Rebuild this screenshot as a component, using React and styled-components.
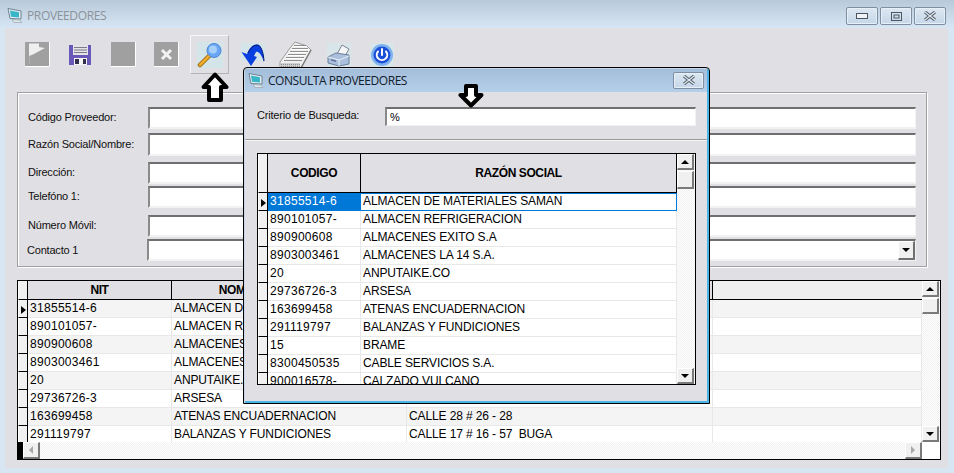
import React from "react";
import styled, { createGlobalStyle } from "styled-components";

const Global = createGlobalStyle`
  html, body { margin: 0; padding: 0; background: #d8e5f2; }
  * { box-sizing: border-box; }
`;

const Win = styled.div`
  position: relative;
  width: 954px;
  height: 473px;
  overflow: hidden;
  display: flex;
  flex-direction: column;
  background: #d8e5f2;
`;
const TitleBar = styled.div`
  height: ${p => (p.$dialog ? 23 : 28)}px;
  flex: none;
  display: flex;
  align-items: center;
  padding: ${p => (p.$dialog ? "0 3px 0 3px" : "2px 8px 0 7px")};
  gap: 4px;
  background: ${p => p.$dialog
    ? "linear-gradient(#a3bcd9, #b6cfe9)"
    : "linear-gradient(#b8c9d9, #d7e6f4)"};
`;
const TitleText = styled.span`
  flex: 1;
  font: 12px "Open Sans", "Noto Sans", sans-serif;
  letter-spacing: ${p => (p.$dialog ? -0.45 : -0.35)}px;
  margin-top: ${p => (p.$dialog ? -1 : 0)}px;
  color: ${p => (p.$dialog ? "#10202c" : "#8b929a")};
`;
const Caption = styled.div`
  display: flex;
  gap: 2px;
  margin-top: ${p => (p.$dialog ? -1 : 0)}px;
  align-self: ${p => (p.$dialog ? "center" : "flex-start")};
  padding-top: ${p => (p.$dialog ? 0 : 5)}px;
`;
const CapBtn = styled.div`
  width: ${p => p.$w || 32}px;
  height: ${p => p.$h || 18}px;
  border: 1px solid #7f8fa3;
  border-radius: 2px;
  display: flex;
  align-items: center;
  justify-content: center;
  background: linear-gradient(#dce7f2, #c6d7e8);
  box-shadow: inset 0 0 0 1px #e8f0f7;
`;
const Client = styled.div`
  flex: 1;
  margin: 0 6px 5px 5px;
  background: #e0dfe3;
  display: flex;
  flex-direction: column;
`;
const Toolbar = styled.div`
  height: 64px;
  flex: none;
  display: flex;
  gap: 4px;
  padding: 7px 0 0 13px;
`;
const ToolBtn = styled.div`
  width: 39px;
  height: 39px;
  display: flex;
  align-items: center;
  justify-content: center;
  border: 1px solid ${p => (p.$active ? "#f6f6f6" : "transparent")};
  ${p => p.$active && "border-right-color:#b4b4b4;border-bottom-color:#b4b4b4;"}
`;
const FormBox = styled.div`
  margin-left: 12px;
  width: 910px;
  height: 175px;
  flex: none;
  border: 1px solid #a0a0a0;
  box-shadow: inset 1px 1px 0 #fff, 1px 1px 0 #fff;
  padding: 0 10px 0 10px;
`;
const FormRow = styled.div`
  display: flex;
  align-items: center;
  margin-top: ${p => p.$mt}px;
  height: ${p => p.$h}px;
`;
const Label = styled.label`
  width: ${p => p.$w || 120}px;
  margin-left: ${p => p.$ml || 0}px;
  flex: none;
  padding-bottom: ${p => (p.$pb === undefined ? 2 : p.$pb)}px;
  font: 11px "Liberation Sans", Arial, sans-serif;
  letter-spacing: -0.2px;
  color: #101010;
  white-space: nowrap;
`;
const Field = styled.div`
  flex: 1;
  height: 100%;
  background: #fff;
  border-style: solid;
  border-width: 2px 1px 2px 2px;
  border-color: #6f6f6f #f2f2f2 #f2f2f2 #8a8a8a;
  font: 11px "Liberation Sans", Arial, sans-serif;
  display: flex;
  justify-content: flex-end;
  padding: 0 0 0 4px;
  align-items: center;
`;
const DropBtn = styled.div`
  width: 17px;
  height: 19px;
  background: #f0f0f0;
  border-style: solid;
  border-width: 1px 2px 2px 1px;
  border-color: #fff #6f6f6f #6f6f6f #fff;
  display: flex;
  align-items: center;
  justify-content: center;
`;
const TriDown = styled.span`
  width: 0; height: 0;
  border-left: 4px solid transparent;
  border-right: 4px solid transparent;
  border-top: 4px solid #000;
`;
const TriUp = styled(TriDown)`
  border-top: 0;
  border-bottom: 4px solid #000;
`;
const TriLeft = styled.span`
  width: 0; height: 0;
  border-top: 4px solid transparent;
  border-bottom: 4px solid transparent;
  border-right: 4px solid #a8a8a8;
`;
const TriRight = styled.span`
  width: 0; height: 0;
  border-top: 4px solid transparent;
  border-bottom: 4px solid transparent;
  border-left: 4px solid #a8a8a8;
`;
const GridFrame = styled.div`
  margin-top: ${p => p.$mt || 0}px;
  margin-left: ${p => p.$ml}px;
  width: ${p => p.$w}px;
  height: ${p => p.$h}px;
  flex: none;
  border: 1px solid #000;
  display: flex;
  flex-direction: column;
  background: #fff;
  overflow: hidden;
`;
const GridTop = styled.div`
  flex: 1;
  min-height: 0;
  display: flex;
`;
const Table = styled.div`
  flex: 1;
  min-width: 0;
  overflow: hidden;
  font: 12px "Liberation Sans", Arial, sans-serif;
  color: #000;
`;
const Row = styled.div`
  display: flex;
  height: ${p => p.$h || 18}px;
  background: ${p => (p.$alt ? "#f4f4f4" : "#fff")};
`;
const Selector = styled.div`
  width: 10px;
  flex: none;
  background: #f0f0f0;
  border-right: 1px solid #000;
  border-bottom: 1px solid #000;
  border-left: 1px solid #fff;
  display: flex;
  align-items: center;
  justify-content: flex-end;
  padding-right: 1px;
`;
const Marker = styled.span`
  width: 0; height: 0;
  border-top: 4px solid transparent;
  border-bottom: 4px solid transparent;
  border-left: 5px solid #000;
  margin-top: 2px;
`;
const HeadCell = styled.div`
  width: ${p => p.$w}px;
  flex: none;
  background: ${p => (p.$blank ? "#efefef" : "#e0dfe3")};
  border-right: ${p => (p.$blank ? 0 : "1px solid #000")};
  border-bottom: 1px solid #000;
  font: bold 12px "Liberation Sans", Arial, sans-serif;
  letter-spacing: -0.4px;
  display: flex;
  align-items: center;
  justify-content: center;
  white-space: nowrap;
  overflow: hidden;
`;
const Cell = styled.div`
  width: ${p => p.$w}px;
  flex: none;
  border-right: 1px solid #e8e8e8;
  border-bottom: 1px solid #e8e8e8;
  padding: 0 2px;
  line-height: 17px;
  white-space: pre;
  overflow: hidden;
  letter-spacing: ${p => (p.$code ? 0.3 : -0.12)}px;
  ${p => p.$sel && "background:#0078d7;color:#fff;border-color:#0078d7;"}
  ${p => p.$focus && "border:1px solid #0078d7;border-left:0;line-height:15px;"}
`;
const VScroll = styled.div`
  width: 18px;
  flex: none;
  display: flex;
  flex-direction: column;
  background: repeating-conic-gradient(#f0f0f0 0 25%, #fff 0 50%) 0 0 / 2px 2px;
`;
const ScrollBtn = styled.div`
  width: 17px;
  height: ${p => p.$h || 16}px;
  flex: none;
  margin-top: ${p => p.$mt || 0}px;
  background: #f0f0f0;
  border-style: solid;
  border-width: 1px 2px 2px 1px;
  border-color: #fff #7a7a7a #7a7a7a #fff;
  display: flex;
  align-items: center;
  justify-content: center;
`;
const Spacer = styled.div`
  flex: 1;
`;
const HScroll = styled.div`
  height: 17px;
  flex: none;
  display: flex;
  background: repeating-conic-gradient(#f0f0f0 0 25%, #fff 0 50%) 0 0 / 2px 2px;
`;
const BlackStub = styled.div`
  width: 5px;
  background: #000;
`;
const Corner = styled.div`
  width: 18px;
  background: #fff;
`;
const Dialog = styled.div`
  position: absolute;
  left: 243px;
  top: 67px;
  width: 467px;
  height: 337px;
  border: 1px solid #000;
  border-radius: 4px 4px 0 0;
  background: #e0dfe3;
  display: flex;
  flex-direction: column;
  box-shadow: inset 1px 1px 0 #c8d8ea, inset -2px -2px 0 #4cb4e6;
  padding: 1px 2px 2px 1px;
`;
const SearchRow = styled.div`
  display: flex;
  align-items: center;
  margin: 15px 11px 0 12px;
  height: 19px;
  flex: none;
`;
const SearchField = styled(Field)`
  justify-content: flex-start;
  padding-left: 3px;
  border-width: 2px 1px 1px 2px;
`;
const Divider = styled.div`
  height: 2px;
  flex: none;
  margin-top: 13px;
  background: #9a9a9a;
  border-bottom: 1px solid #f4f4f4;
`;
const Callout = styled.svg`
  position: absolute;
  left: ${p => p.$x}px;
  top: ${p => p.$y}px;
`;

const Monitor = () => (
  <svg width="16" height="17" viewBox="0 0 16 17">
    <path d="M1 1.5 L14 4 V12 L3 11.5 Z" fill="#e6eef2" stroke="#6b8392" />
    <path d="M3 3.5 L12 5.2 V10.5 L4 9.8 Z" fill="#38b6c8" />
    <path d="M5 12.5 L13 13 L15 15.5 L7 15.5 Z" fill="#dfe5e8" stroke="#97a5ad" strokeWidth=".7" />
  </svg>
);
const X = ({ c = "#4f5a66" }) => (
  <svg width="14" height="10" viewBox="0 0 14 10">
    <path d="M2 1 L12 9 M12 1 L2 9" stroke={c} strokeWidth="3.2" />
    <path d="M2 1 L12 9 M12 1 L2 9" stroke="#e6edf4" strokeWidth="1.2" />
  </svg>
);
const Flag = () => (
  <svg width="25" height="25" viewBox="0 0 25 25">
    <rect width="25" height="25" fill="#a0a0a0" />
    <path d="M0 24.5 H24.5 V0" stroke="#fff" fill="none" />
    <path d="M4 1.5 H14 V5 L20 6 L8 12.5 L4 14 Z" fill="#efefef" />
    <path d="M4.5 14 V22" stroke="#b0b0b0" />
  </svg>
);
const Floppy = () => (
  <svg width="23" height="22" viewBox="0 0 23 22">
    <path d="M0 1 H22 V21 H0 Z" fill="#6a58b8" />
    <rect x="4" y="1" width="15" height="10" fill="#e3e3e8" />
    <path d="M5 3.5 H18 M5 6 H18 M5 8.5 H18" stroke="#7a7a88" />
    <rect x="5" y="14" width="13" height="7" fill="#f4f4f4" />
    <rect x="6" y="15" width="4" height="5" fill="#30304c" />
    <rect x="14" y="15" width="3" height="5" fill="#30304c" />
  </svg>
);
const GraySquare = () => (
  <svg width="25" height="25" viewBox="0 0 25 25">
    <rect width="25" height="25" fill="#a0a0a0" />
    <path d="M0 24.5 H24.5 V0" stroke="#fff" fill="none" />
  </svg>
);
const GrayX = () => (
  <svg width="25" height="25" viewBox="0 0 25 25">
    <rect width="25" height="25" fill="#a0a0a0" />
    <path d="M0 24.5 H24.5 V0" stroke="#fff" fill="none" />
    <path d="M8 8 L17 17 M17 8 L8 17" stroke="#f2f2f2" strokeWidth="3" />
  </svg>
);
const Magnifier = () => (
  <svg width="26" height="26" viewBox="0 0 26 26">
    <rect width="26" height="26" fill="#d3e5e8" />
    <path d="M3 23 L13 13" stroke="#9a6a14" strokeWidth="4.5" strokeLinecap="round" />
    <path d="M3 23 L13 13" stroke="#f2ad2c" strokeWidth="2.5" strokeLinecap="round" />
    <circle cx="17" cy="8.5" r="7" fill="#6aa6f2" stroke="#4f86d8" />
    <circle cx="16" cy="7.5" r="4" fill="#a6d0fa" />
  </svg>
);
const Undo = () => (
  <svg width="24" height="24" viewBox="0 0 24 24">
    <rect width="24" height="18" fill="#d3e5e8" />
    <path d="M0.5 9 L6 11 C9 3 14 0 18 2 C21 5 23 12 23 19 C21 13 18 8 15 9 L13 13 L16 14 L10 23 Z" fill="#0a3fe0" />
    <path d="M7 10 C10 4 14 1 18 2.5 C21 5 22.5 11 23 18" stroke="#03186a" fill="none" />
  </svg>
);
const Cards = () => (
  <svg width="33" height="28" viewBox="0 0 33 28" shapeRendering="crispEdges">
    <path d="M16 1 L28 5 L32 9 L22 27 H1 V21 L11 7 Z" fill="#efefef" stroke="#9c9c9c" shapeRendering="auto" />
    <path d="M15 4 H27 M13 7 H29 M11 10 H29 M9 13 H27 M7 16 H25 M5 19 H23" stroke="#8e8e8e" />
    <path d="M15 5 H28 M13 8 H30 M11 11 H28 M9 14 H26 M7 17 H24" stroke="#fff" />
    <path d="M2 22 H21 V26 H2 Z" fill="#cfcfcf" />
    <path d="M2 23 H21 M2 25 H21" stroke="#8a8a8a" strokeDasharray="1 1" />
    <path d="M22 27 L32 9" stroke="#7c7c7c" strokeWidth="1.5" shapeRendering="auto" />
  </svg>
);
const Printer = () => (
  <svg width="24" height="24" viewBox="0 0 24 24">
    <rect width="24" height="24" fill="#d8e6ea" />
    <path d="M10 11 L15 2 L22 6 L18 13 Z" fill="#f4f6f8" stroke="#7c8590" />
    <path d="M1 14 L9 10 L22 12 V21 L12 23 L1 20 Z" fill="#a9bfdc" stroke="#6d7f9c" />
    <path d="M1 14 L12 17 L22 13 M12 17 V23" stroke="#e8eef6" fill="none" />
    <path d="M4 16 L9 17.5 V19 L4 17.5 Z" fill="#5a6f94" />
  </svg>
);
const Power = () => (
  <svg width="24" height="24" viewBox="0 0 24 24">
    <rect width="24" height="24" fill="#d8e6ea" />
    <circle cx="12" cy="12" r="11" fill="#7fb2ee" />
    <circle cx="12" cy="12" r="8.5" fill="#1b4fd8" />
    <path d="M8 8.5 A5.2 5.2 0 1 0 16 8.5" stroke="#fff" strokeWidth="2" fill="none" strokeLinecap="round" />
    <path d="M12 6 V12" stroke="#fff" strokeWidth="2" strokeLinecap="round" />
  </svg>
);

const mainColumns = [
  { w: 144, t: "NIT" },
  { w: 235, t: "NOMBRE/RAZÓN SOCIAL" },
  { w: 306, t: "DIRECCIÓN" },
];
const mainRows = [
  ["31855514-6", "ALMACEN DE MATERIALES SAMAN", ""],
  ["890101057-", "ALMACEN REFRIGERACION", ""],
  ["890900608", "ALMACENES EXITO S.A", ""],
  ["8903003461", "ALMACENES LA 14 S.A.", ""],
  ["20", "ANPUTAIKE.CO", ""],
  ["29736726-3", "ARSESA", ""],
  ["163699458", "ATENAS ENCUADERNACION", "CALLE 28 # 26 - 28"],
  ["291119797", "BALANZAS Y FUNDICIONES", "CALLE 17 # 16 - 57  BUGA"],
];
const dialogRows = [
  ["31855514-6", "ALMACEN DE MATERIALES SAMAN"],
  ["890101057-", "ALMACEN REFRIGERACION"],
  ["890900608", "ALMACENES EXITO S.A"],
  ["8903003461", "ALMACENES LA 14 S.A."],
  ["20", "ANPUTAIKE.CO"],
  ["29736726-3", "ARSESA"],
  ["163699458", "ATENAS ENCUADERNACION"],
  ["291119797", "BALANZAS Y FUNDICIONES"],
  ["15", "BRAME"],
  ["8300450535", "CABLE SERVICIOS S.A."],
  ["900016578-", "CALZADO VULCANO"],
];
const formFields = [
  { label: "Código Proveedor:", mt: 14, h: 22 },
  { label: "Razón Social/Nombre:", mt: 4, h: 23 },
  { label: "Dirección:", mt: 6, h: 22 },
  { label: "Telefóno 1:", mt: 2, h: 22 },
  { label: "Número Móvil:", mt: 7, h: 22 },
  { label: "Contacto 1", mt: 2, h: 22, ml: -1, pb: 0, combo: true },
];

const UpArrow = () => (
  <Callout $x={201} $y={72} width="28" height="30" viewBox="0 0 28 30">
    <path d="M14 2.5 L25.5 15 H20 V28 H8 V15 H2.5 Z" fill="#fff" stroke="#000" strokeWidth="4" strokeLinejoin="round" />
  </Callout>
);
const DownArrow = () => (
  <Callout $x={458} $y={84} width="26" height="24" viewBox="0 0 26 24">
    <path d="M8 2 H18 V11 H23.5 L13 21.5 L2.5 11 H8 Z" fill="#fff" stroke="#000" strokeWidth="4" strokeLinejoin="round" />
  </Callout>
);

export default function App() {
  return (
    <Win>
      <Global />
      <TitleBar>
        <Monitor />
        <TitleText>PROVEEDORES</TitleText>
        <Caption>
          <CapBtn>
            <svg width="12" height="6"><rect x=".5" y=".5" width="11" height="5" fill="#f0f3f6" stroke="#4c5662" /></svg>
          </CapBtn>
          <CapBtn>
            <svg width="11" height="9"><rect x=".5" y=".5" width="10" height="8" fill="none" stroke="#4c5662" /><rect x="3" y="3" width="5" height="3" fill="none" stroke="#4c5662" /></svg>
          </CapBtn>
          <CapBtn><X /></CapBtn>
        </Caption>
      </TitleBar>
      <Client>
        <Toolbar>
          <ToolBtn><Flag /></ToolBtn>
          <ToolBtn><Floppy /></ToolBtn>
          <ToolBtn><GraySquare /></ToolBtn>
          <ToolBtn><GrayX /></ToolBtn>
          <ToolBtn $active><Magnifier /></ToolBtn>
          <ToolBtn><Undo /></ToolBtn>
          <ToolBtn><Cards /></ToolBtn>
          <ToolBtn><Printer /></ToolBtn>
          <ToolBtn><Power /></ToolBtn>
        </Toolbar>
        <FormBox>
          {formFields.map(f => (
            <FormRow key={f.label} $mt={f.mt} $h={f.h}>
              <Label $ml={f.ml} $pb={f.pb} $w={120}>{f.label}</Label>
              <Field>{f.combo && <DropBtn><TriDown /></DropBtn>}</Field>
            </FormRow>
          ))}
        </FormBox>
        <GridFrame $mt={13} $ml={12} $w={924} $h={180}>
          <GridTop>
            <Table>
              <Row $h={19}>
                <Selector />
                {mainColumns.map(c => <HeadCell key={c.t} $w={c.w}>{c.t}</HeadCell>)}
                <HeadCell $w={209} $blank />
              </Row>
              {mainRows.map((r, i) => (
                <Row key={r[0]} $alt={i % 2 === 0}>
                  <Selector>{i === 0 && <Marker />}</Selector>
                  {mainColumns.map((c, j) => <Cell key={c.t} $w={c.w} $code={j === 0}>{r[j]}</Cell>)}
                  <Cell $w={209} />
                </Row>
              ))}
            </Table>
            <VScroll>
              <ScrollBtn><TriUp /></ScrollBtn>
              <ScrollBtn $mt={1} />
              <Spacer />
              <ScrollBtn><TriDown /></ScrollBtn>
            </VScroll>
          </GridTop>
          <HScroll>
            <BlackStub />
            <ScrollBtn $h={17}><TriLeft /></ScrollBtn>
            <Spacer />
            <ScrollBtn $h={17}><TriRight /></ScrollBtn>
            <Corner />
          </HScroll>
        </GridFrame>
      </Client>
      <UpArrow />
      <Dialog>
        <TitleBar $dialog>
          <Monitor />
          <TitleText $dialog>CONSULTA PROVEEDORES</TitleText>
          <Caption $dialog><CapBtn $w={31} $h={17}><X /></CapBtn></Caption>
        </TitleBar>
        <SearchRow>
          <Label $w={128} $pb={4}>Criterio de Busqueda:</Label>
          <SearchField>%</SearchField>
        </SearchRow>
        <Divider />
        <GridFrame $mt={12} $ml={12} $w={439} $h={232}>
          <GridTop>
            <Table>
              <Row $h={39}>
                <Selector />
                <HeadCell $w={93}>CODIGO</HeadCell>
                <HeadCell $w={316}>RAZÓN SOCIAL</HeadCell>
              </Row>
              {dialogRows.map((r, i) => (
                <Row key={r[0]}>
                  <Selector>{i === 0 && <Marker />}</Selector>
                  <Cell $w={93} $code $sel={i === 0}>{r[0]}</Cell>
                  <Cell $w={316} $focus={i === 0}>{r[1]}</Cell>
                </Row>
              ))}
            </Table>
            <VScroll>
              <ScrollBtn><TriUp /></ScrollBtn>
              <ScrollBtn $mt={1} $h={18} />
              <Spacer />
              <ScrollBtn><TriDown /></ScrollBtn>
            </VScroll>
          </GridTop>
        </GridFrame>
      </Dialog>
      <DownArrow />
    </Win>
  );
}
